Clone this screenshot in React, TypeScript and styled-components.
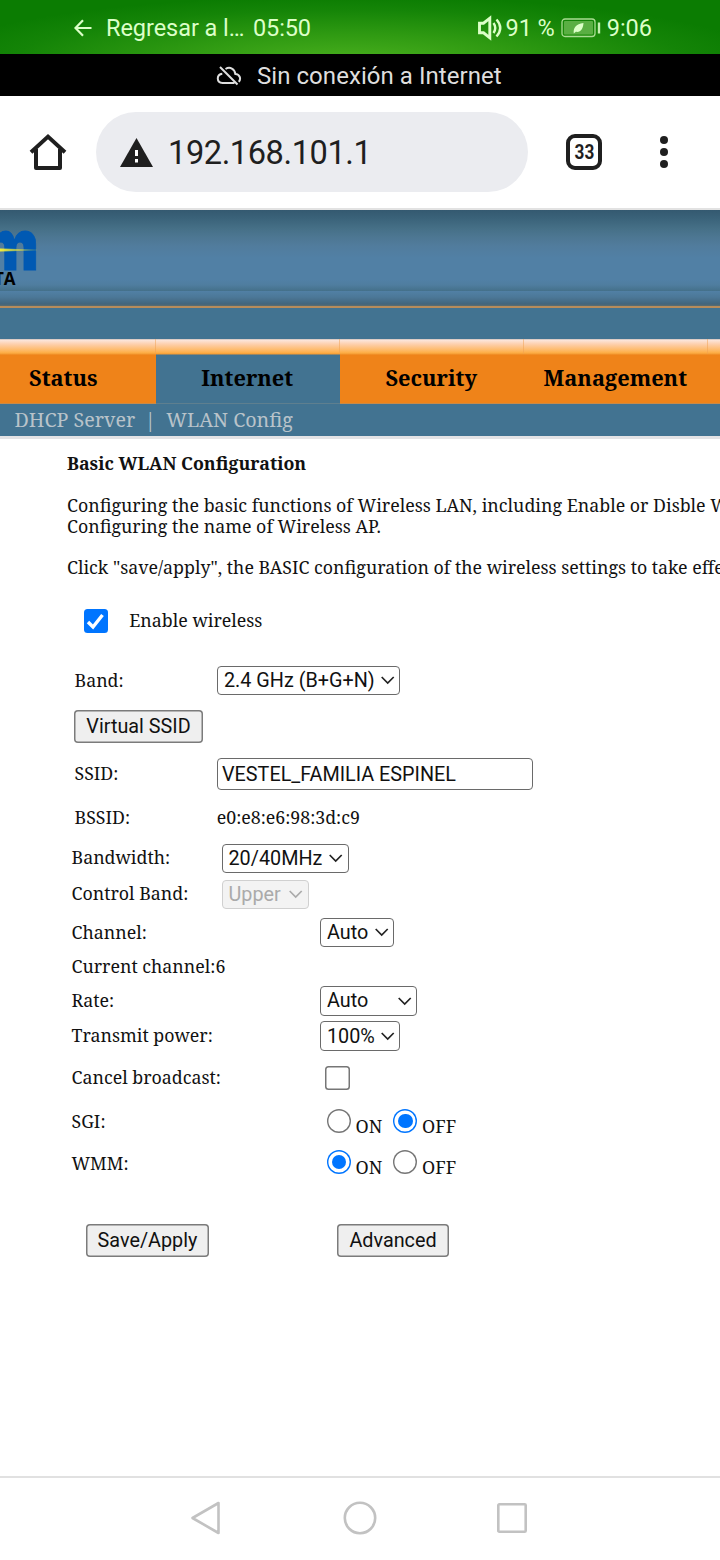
import React from 'react';
import styled, { createGlobalStyle } from 'styled-components';

const serif = `"Noto Serif", "DejaVu Serif Condensed", "DejaVu Serif", serif`;
const sans = `Roboto, sans-serif`;

const GlobalStyle = createGlobalStyle`
  * { box-sizing: border-box; }
  body { margin: 0; background: #fff; overflow: hidden; }
`;

const Screen = styled.div`
  width: 720px;
  height: 1560px;
  display: flex;
  flex-direction: column;
  overflow: hidden;
  background: #fff;
  color: #111;
  font-family: ${sans};
`;

const Label = styled.span<{ $ls?: number; $ml?: number; $mt?: number }>`
  white-space: pre;
  letter-spacing: ${p => p.$ls ?? 0}px;
  margin-left: ${p => p.$ml ?? 0}px;
  margin-top: ${p => p.$mt ?? 0}px;
`;

const StatusBar = styled.header`
  height: 54px;
  flex: none;
  display: flex;
  align-items: center;
  padding: 1px 68px 0 74px;
  color: #dcffc8;
  font-size: 23.5px;
  background: radial-gradient(ellipse 420px 66px at 350px 62px, #4ab01e 0%, #2f9a12 42%, #148407 80%, #0b7c02 100%);
`;

const Spacer = styled.div`
  flex: 1;
`;

const Battery = styled.svg`
  margin-left: 6px;
`;

const Offline = styled.div`
  height: 42px;
  flex: none;
  display: flex;
  align-items: center;
  padding: 1px 0 0 216px;
  background: #000;
  color: #dedede;
  font-size: 24px;
`;

const BrowserBar = styled.div`
  height: 114px;
  flex: none;
  display: flex;
  align-items: center;
  padding-left: 28px;
  border-bottom: 2px solid #e2e2e2;
  color: #1f1f1f;
`;

const Address = styled.div`
  width: 432px;
  height: 80px;
  margin-left: 28px;
  padding: 2px 0 0 24px;
  display: flex;
  align-items: center;
  border-radius: 40px;
  background: #ebecf0;
  font-size: 32.6px;
`;

const TabCount = styled.div`
  width: 36px;
  height: 36px;
  margin-left: 38px;
  display: flex;
  align-items: center;
  justify-content: center;
  border: 4px solid #1f1f1f;
  border-radius: 9px;
  font-size: 20px;
  font-weight: 700;
`;

const Count = styled.span`
  transform: scaleX(0.86);
`;

const Menu = styled.div`
  margin-left: 58px;
  display: grid;
  gap: 4px;
`;

const Dot = styled.i`
  width: 8px;
  height: 8px;
  border-radius: 50%;
  background: #1f1f1f;
`;

const Banner = styled.div`
  height: 96px;
  flex: none;
  background: linear-gradient(#345970 0, #3a6279 8px, #456f86 18px, #4c7691 26px, #517c9d 36px, #5180a5 48px,
    #5180a5 70px, #4f7d9f 75px, #44708a 81px, #5180a5 81px, #4c7898 87px, #42657c 94px, #5c6d70 96px);
`;

const Accent = styled.div`
  height: 2px;
  flex: none;
  background: #b78c5b;
`;

const Filler = styled.div`
  height: 31px;
  flex: none;
  background: #427391;
`;

const Tabs = styled.nav`
  flex: none;
  display: flex;
  margin-left: -28.5px;
  font-family: ${serif};
`;

const Tab = styled.div<{ $active?: boolean }>`
  width: 184px;
  height: 65px;
  flex: none;
  display: flex;
  align-items: center;
  justify-content: center;
  padding: 13px 0.5px 0 0;
  border-bottom: 1px solid ${p => (p.$active ? '#5e7f8f' : '#c98a48')};
  background: linear-gradient(90deg, transparent 183px, rgba(240, 160, 80, 0.5) 183px) 0 0 / 184px 15px no-repeat,
    linear-gradient(#bcb3b0 0, #fbe6dc 1px, #fdd0ae 5px, #feb65d 12px, #fdac42 14px, #f39a34 15px,
    ${p => (p.$active ? '#427391' : '#ef8319')} 16px);
  color: #000;
  font-size: 21.8px;
  font-weight: 700;
`;

const SubMenu = styled.div`
  height: 35px;
  flex: none;
  display: flex;
  align-items: center;
  padding: 0 0 2px 14.5px;
  border-bottom: 3px solid #e3e3e5;
  background: #427391;
  color: #b9c3ca;
  font-family: ${serif};
  font-size: 19.7px;
`;

const Content = styled.main`
  flex: 1;
  padding-top: 14px;
  font-family: ${serif};
  font-size: 17.8px;
`;

const Intro = styled.div`
  display: flex;
  flex-direction: column;
  height: 125px;
  padding-left: 67px;
  line-height: 20.7px;
`;

const Line = styled.div<{ $bold?: boolean; $gap?: number }>`
  height: 20.7px;
  margin-bottom: ${p => p.$gap ?? 0}px;
  white-space: pre;
  font-weight: ${p => (p.$bold ? 700 : 400)};
`;

const Row = styled.div<{ $h: number; $left?: number }>`
  height: ${p => p.$h}px;
  padding-left: ${p => p.$left ?? 71.5}px;
  display: flex;
  align-items: center;
`;

const Cell = styled.div<{ $w: number; $lift?: number }>`
  width: ${p => p.$w}px;
  flex: none;
  display: flex;
  margin-bottom: ${p => p.$lift ?? 2}px;
  white-space: pre;
`;

const Control = styled.div<{ $w: number; $h?: number; $disabled?: boolean; $lift?: number }>`
  width: ${p => p.$w}px;
  height: ${p => p.$h ?? 29}px;
  display: flex;
  align-items: center;
  justify-content: space-between;
  padding: 0 4.5px ${p => p.$lift ?? 1}px 6px;
  border: 1px solid ${p => (p.$disabled ? '#d0d0d0' : '#6a6a6a')};
  border-radius: 4px;
  background: ${p => (p.$disabled ? '#f3f3f3' : '#fff')};
  color: ${p => (p.$disabled ? '#aaa' : '#111')};
  font-family: ${sans};
  font-size: 19.8px;
`;

const Field = styled(Control)`
  padding: 0 4px;
`;

const Button = styled.div<{ $w: number; $ml?: number }>`
  width: ${p => p.$w}px;
  height: 33px;
  margin-left: ${p => p.$ml ?? 0}px;
  display: flex;
  align-items: center;
  justify-content: center;
  padding-bottom: 1px;
  box-shadow: inset 0 0 0 1.5px #7b7b7b;
  border-radius: 4px;
  background: #efefef;
  font-family: ${sans};
  font-size: 19.8px;
  color: #111;
`;

const Check = styled.div<{ $on?: boolean; $ml?: number }>`
  width: 24.5px;
  height: 24.5px;
  margin-left: ${p => p.$ml ?? 0}px;
  display: flex;
  align-items: center;
  justify-content: center;
  box-shadow: ${p => (p.$on ? 'none' : 'inset 0 0 0 1.5px #767676')};
  border-radius: 3.5px;
  background: ${p => (p.$on ? '#0075ff' : '#fff')};
`;

const Radio = styled.div<{ $on?: boolean; $ml?: number }>`
  width: 24px;
  height: 24px;
  margin-left: ${p => p.$ml ?? 0}px;
  margin-bottom: 1px;
  display: flex;
  align-items: center;
  justify-content: center;
  box-shadow: inset 0 0 0 1.4px ${p => (p.$on ? '#0075ff' : '#767676')};
  border-radius: 50%;
  &::after {
    content: '';
    width: 14.6px;
    height: 14.6px;
    border-radius: 50%;
    background: ${p => (p.$on ? '#0075ff' : 'transparent')};
  }
`;

const SystemNav = styled.footer`
  height: 84px;
  flex: none;
  display: flex;
  justify-content: center;
  gap: 118px;
  padding-top: 23px;
  border-top: 2px solid #e1e1e1;
`;

const Chevron = ({ color = '#222' }: { color?: string }) => (
  <svg width="14" height="10" viewBox="0 0 14 10" fill="none" stroke={color} strokeWidth="1.7">
    <path d="M.7 2 6.7 8 12.7 2" />
  </svg>
);

const Select = ({ w, h, text, disabled, lift }: { w: number; h?: number; text: string; disabled?: boolean; lift?: number }) => (
  <Control $w={w} $h={h} $disabled={disabled} $lift={lift}>
    <Label>{text}</Label>
    <Chevron color={disabled ? '#aaa' : '#222'} />
  </Control>
);

const RadioPair = ({ on }: { on: boolean }) => (
  <>
    <Radio $on={on} $ml={7} />
    <Cell $w={38}><Label $ml={4.5} $mt={10}>ON</Label></Cell>
    <Radio $on={!on} $ml={4.3} />
    <Label $ml={4.7} $mt={8}>OFF</Label>
  </>
);

export default function App() {
  return (
    <Screen>
      <GlobalStyle />
      <StatusBar>
        <svg width="18" height="18" viewBox="0 0 18 18" fill="none" stroke="currentColor" strokeWidth="2.2">
          <path d="M17.5 9H1.6M9 1.2 1.5 9 9 16.8" />
        </svg>
        <Label $ml={14} $ls={-0.05}>Regresar a l…</Label>
        <Label $ml={8.5} $ls={-0.1}>05:50</Label>
        <Spacer />
        <svg width="26" height="26" viewBox="0 0 26 26" fill="none" stroke="currentColor" strokeWidth="2.9">
          <path d="M2.5 8.2H6.5L12.8 3.2V22.8L6.5 17.8H2.5Z" />
          <path d="M16.5 8Q20 13 16.5 18M19.5 4.5Q27 13 19.5 21.5" strokeWidth="2.4" />
        </svg>
        <Label $ml={3} $ls={-0.1}>91 %</Label>
        <Battery width="40" height="20" viewBox="0 0 40 20">
          <rect x="1" y="1" width="33" height="17.5" rx="3" fill="none" stroke="#a9dc92" strokeWidth="1.3" />
          <rect x="3" y="3" width="29" height="13.5" rx="1" fill="#5aaf43" />
          <path d="M12.8 15.5C12 10 15 6 22.5 5C22 11 19.5 14.8 14.8 13.8Z" fill="#dcffc8" />
          <path d="M38 4.5V15.5" stroke="#c3efb0" strokeWidth="2.4" />
        </Battery>
        <Label $ml={6}>9:06</Label>
      </StatusBar>
      <Offline>
        <svg width="26" height="20" viewBox="0 0 26 20" fill="none" stroke="currentColor" strokeWidth="2">
          <path d="M4 1 21.5 18.5M9.5 3C14 .2 18.7 3 19.4 8C23.5 8.2 25.5 12.5 22.8 15.8M18.5 17H6.5C.3 16.5 .2 8.5 6.3 7.7" />
        </svg>
        <Label $ml={15} $ls={0.05}>Sin conexión a Internet</Label>
      </Offline>
      <BrowserBar>
        <svg width="40" height="40" viewBox="0 0 40 40" fill="none" stroke="currentColor" strokeWidth="4" strokeLinejoin="round">
          <path d="M3 20.2 20 4.6 37 20.2" strokeLinejoin="miter" />
          <path d="M8 17V36H32V17" />
        </svg>
        <Address>
          <svg width="34" height="30" viewBox="0 0 34 30">
            <path d="M16.5 0 33 29H0Z" fill="currentColor" />
            <path d="M16.5 12V18M16.5 21V24.5" stroke="#fff" strokeWidth="3" />
          </svg>
          <Label $ml={14} $ls={-0.42}>192.168.101.1</Label>
        </Address>
        <TabCount><Count>33</Count></TabCount>
        <Menu><Dot /><Dot /><Dot /></Menu>
      </BrowserBar>
      <Banner>
        <svg width="60" height="96" viewBox="0 0 60 96">
          <defs>
            <linearGradient id="flare">
              <stop offset="0" stopColor="#f5ee35" />
              <stop offset="1" stopColor="#f5ee35" stopOpacity="0.15" />
            </linearGradient>
          </defs>
          <text transform="translate(38.8 60) scale(.86 1)" textAnchor="end" fontFamily="Inter" fontWeight="900" fontSize="70" fill="#0059b3" stroke="#0059b3" strokeWidth=".8">m</text>
          <path d="M0 38.4 37 39.4V40.4L0 41.4Z" fill="url(#flare)" />
          <text x="15.5" y="74.5" textAnchor="end" fontFamily="Open Sans" fontWeight="700" fontSize="17" fill="#000">TA</text>
        </svg>
      </Banner>
      <Accent />
      <Filler />
      <Tabs>
        <Tab>Status</Tab>
        <Tab $active>Internet</Tab>
        <Tab>Security</Tab>
        <Tab>Management</Tab>
        <Tab />
      </Tabs>
      <SubMenu>
        <Label>DHCP Server</Label>
        <Label $ml={9.5}>|</Label>
        <Label $ml={10.5}>WLAN Config</Label>
      </SubMenu>
      <Content>
        <Intro>
          <Line $bold $gap={21.7}>Basic WLAN Configuration</Line>
          <Line>Configuring the basic functions of Wireless LAN, including Enable or Disble Wireless</Line>
          <Line $gap={20.7}>Configuring the name of Wireless AP.</Line>
          <Line>Click "save/apply", the BASIC configuration of the wireless settings to take effect.</Line>
        </Intro>
        <Row $h={86} $left={83.5}>
          <Check $on>
            <svg width="19" height="19" viewBox="0 0 19 19" fill="none" stroke="#fff" strokeWidth="3.4">
              <path d="M2 10 7 15 16.5 3" />
            </svg>
          </Check>
          <Cell $w={200}><Label $ml={21.3}>Enable wireless</Label></Cell>
        </Row>
        <Row $h={33} $left={74.5}>
          <Cell $w={142.5}>Band:</Cell>
          <Select w={183} text="2.4 GHz (B+G+N)" />
        </Row>
        <Row $h={59} $left={74}><Button $w={129}>Virtual SSID</Button></Row>
        <Row $h={36} $left={74.5}>
          <Cell $w={142.5}>SSID:</Cell>
          <Field $w={316} $h={32}>VESTEL_FAMILIA ESPINEL</Field>
        </Row>
        <Row $h={52} $left={74.5}>
          <Cell $w={142.2}>BSSID:</Cell>
          <Cell $w={200}>e0:e8:e6:98:3d:c9</Cell>
        </Row>
        <Row $h={29}>
          <Cell $w={150} $lift={4}>Bandwidth:</Cell>
          <Select w={127} text="20/40MHz" />
        </Row>
        <Row $h={42}>
          <Cell $w={150}>Control Band:</Cell>
          <Select w={87} text="Upper" disabled lift={0} />
        </Row>
        <Row $h={35}>
          <Cell $w={248.5}>Channel:</Cell>
          <Select w={74} text="Auto" />
        </Row>
        <Row $h={34}><Cell $w={248.5}>Current channel:6</Cell></Row>
        <Row $h={34}>
          <Cell $w={248.5}>Rate:</Cell>
          <Select w={97} h={30} text="Auto" />
        </Row>
        <Row $h={36}>
          <Cell $w={248.5}>Transmit power:</Cell>
          <Select w={80} h={30} text="100%" lift={0} />
        </Row>
        <Row $h={48}>
          <Cell $w={248.5}>Cancel broadcast:</Cell>
          <Check $ml={5} />
        </Row>
        <Row $h={39}>
          <Cell $w={248.5}>SGI:</Cell>
          <RadioPair on={false} />
        </Row>
        <Row $h={43}>
          <Cell $w={248.5} $lift={0}>WMM:</Cell>
          <RadioPair on />
        </Row>
        <Row $h={113} $left={86}>
          <Button $w={123}>Save/Apply</Button>
          <Button $w={112} $ml={128}>Advanced</Button>
        </Row>
      </Content>
      <SystemNav>
        <svg width="34" height="34" viewBox="0 0 34 34" fill="none" stroke="#c2c2c2" strokeWidth="2.6" strokeLinejoin="round">
          <path d="M27.5 2V32L1.5 17Z" />
        </svg>
        <svg width="34" height="34" viewBox="0 0 34 34" fill="none" stroke="#c2c2c2" strokeWidth="2.6">
          <circle cx="17" cy="17" r="15.2" />
        </svg>
        <svg width="34" height="34" viewBox="0 0 34 34" fill="none" stroke="#c2c2c2" strokeWidth="2.6">
          <rect x="3.3" y="3.3" width="27.4" height="27.4" rx="1" />
        </svg>
      </SystemNav>
    </Screen>
  );
}
